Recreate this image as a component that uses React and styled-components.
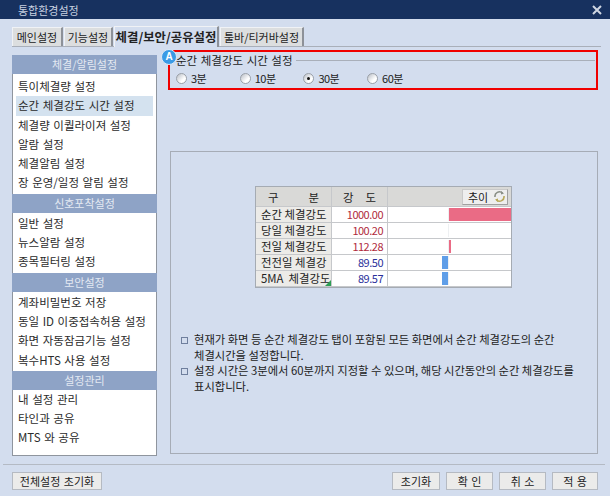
import React from 'react';
import styled, { createGlobalStyle } from 'styled-components';

const GlobalStyle = createGlobalStyle`
  html, body {
    margin: 0;
    padding: 0;
    background: #d3ddee;
  }
  * {
    box-sizing: border-box;
  }
`;

const FONT = `'Noto Sans CJK KR', 'Noto Sans', sans-serif`;

const Window = styled.div`
  width: 610px;
  height: 496px;
  background: #d3ddee;
  font-family: ${FONT};
  font-size: 11.5px;
  word-spacing: 1px;
  line-height: 16px;
  color: #222;
  overflow: hidden;
  display: flex;
  flex-direction: column;
`;

const TitleBar = styled.div`
  height: 19px;
  flex: none;
  background: #17315f;
  color: #c9d2e0;
  display: flex;
  align-items: center;
  justify-content: space-between;
  padding: 0 8px 0 18px;
  font-size: 11px;
`;

const TabRow = styled.div`
  height: 28px;
  flex: none;
  margin: 0 9px 0 12px;
  padding-top: 7px;
  display: flex;
  align-items: flex-end;
  gap: 1px;
  border-bottom: 1px solid #a9afb9;
`;

const Tab = styled.div`
  width: ${({ $w }) => $w}px;
  height: ${({ $active }) => ($active ? 21 : 19)}px;
  margin-bottom: ${({ $active }) => ($active ? -1 : 0)}px;
  background: ${({ $active }) => ($active ? '#d3ddee' : '#dcdedf')};
  border: 1px solid #f0f2f5;
  border-right: 2px solid #8d9198;
  border-bottom: none;
  font-weight: ${({ $active }) => ($active ? 700 : 400)};
  font-size: ${({ $active }) => ($active ? 12.4 : 11)}px;
  display: flex;
  align-items: center;
  justify-content: center;
  white-space: nowrap;
`;

const Main = styled.div`
  flex: 1;
  display: flex;
  gap: 11px;
  padding: 3px 12px 0 12px;
`;

const Sidebar = styled.div`
  width: 145px;
  height: 401px;
  margin-top: 5px;
  background: #fff;
  border: 1px solid #8f959e;
  border-top: none;
  flex: none;
`;

const SectionHead = styled.div`
  height: 19px;
  margin: 0 -1px;
  background: #8ea3c6;
  color: #e4e9f2;
  text-align: center;
  line-height: 19px;
  font-size: 11px;
`;

const SectionList = styled.div`
  padding: ${({ $top }) => $top ?? 1}px 3px 1px 3px;
`;

const SideItem = styled.div`
  height: 19.3px;
  line-height: 18px;
  padding-left: 2px;
  white-space: nowrap;
  color: #2b2b2b;
  background: ${({ $selected }) => ($selected ? '#d4e2ef' : 'transparent')};
`;

const Content = styled.div`
  flex: 1;
  display: flex;
  flex-direction: column;
`;

const GroupBox = styled.div`
  position: relative;
  height: 40px;
  border: 2px solid #f00000;
  padding: 0 0 0 6px;
`;

const Badge = styled.div`
  position: absolute;
  left: -9px;
  top: -3px;
  width: 16px;
  height: 16px;
  border-radius: 50%;
  background: #3b9be6;
  border: 1px solid #dfe9f5;
  color: #fff;
  font-family: 'Liberation Sans', sans-serif;
  font-size: 10px;
  font-weight: 700;
  line-height: 14px;
  text-align: center;
`;

const GroupTitle = styled.div`
  display: flex;
  align-items: center;
  gap: 3px;
  height: 16px;
  white-space: nowrap;
`;

const GroupLine = styled.div`
  flex: 1;
  height: 1px;
  margin-right: 1px;
  background: #a9afb9;
`;

const RadioRow = styled.div`
  display: flex;
  margin-top: 2px;
`;

const RadioLabel = styled.div`
  width: 63.7px;
  display: flex;
  align-items: center;
  gap: 4px;
  font-size: 11px;
  letter-spacing: -0.5px;
`;

const RadioDot = styled.span`
  width: 11px;
  height: 11px;
  border-radius: 50%;
  border: 1px solid #9aa0a8;
  background: linear-gradient(135deg, #b9bec6, #fff 65%);
  display: flex;
  align-items: center;
  justify-content: center;

  &::after {
    content: '';
    width: 3px;
    height: 3px;
    border-radius: 50%;
    background: ${({ $checked }) => ($checked ? '#111' : 'transparent')};
  }
`;

const Panel = styled.div`
  margin-top: 61px;
  height: 303px;
  margin-left: 2px;
  border: 1px solid #a6acb6;
  display: flex;
  flex-direction: column;
  align-items: center;
  padding-top: 34px;
`;

const Table = styled.div`
  width: 257px;
  margin-left: -1px;
  border: 1px solid #a5abb3;
  background: #fff;
  display: grid;
  grid-template-columns: 76px 56px 1fr;
  grid-template-rows: 20px repeat(5, 16px);
  font-size: 11.4px;
  word-spacing: 0;
`;

const HeadCell = styled.div`
  background: #d9d9d7;
  border-right: 1px solid #c6c8cb;
  border-bottom: 1px solid #c6c8cb;
  display: flex;
  align-items: center;
  justify-content: space-between;
  padding: 0 ${({ $pad }) => $pad}px;
`;

const TrendHead = styled(HeadCell)`
  justify-content: flex-end;
  padding: 0 3px 0 0;
  border-right: none;
`;

const TrendButton = styled.div`
  width: 46px;
  height: 16px;
  background: #eeeeee;
  border: 1px solid #c9c9c9;
  border-right-color: #a0a0a0;
  border-bottom-color: #a0a0a0;
  display: flex;
  align-items: center;
  justify-content: space-between;
  padding: 0 1px 0 5px;
  font-size: 11px;
`;

const LabelCell = styled.div`
  position: relative;
  background: #ecebe8;
  border-right: 1px solid #c6c8cb;
  border-bottom: 1px solid #c6c8cb;
  padding-left: 5px;
  line-height: 15px;
  white-space: pre;
`;

const Corner = styled.span`
  position: absolute;
  right: 0;
  bottom: 0;
  border-style: solid;
  border-width: 0 0 6px 6px;
  border-color: transparent transparent #2e9e54 transparent;
`;

const ValueCell = styled.div`
  border-right: 1px solid #c6c8cb;
  border-bottom: 1px solid #c6c8cb;
  color: ${({ $up }) => ($up ? '#b02a3c' : '#2b2f9a')};
  text-align: right;
  padding-right: 4px;
  line-height: 15px;
  font-size: 11px;
  letter-spacing: -0.5px;
`;

const BarCell = styled.div`
  border-bottom: 1px solid #c6c8cb;
  display: grid;
  grid-template-columns: 61px 1fr;
  padding: 1px 0;
`;

const BarLeft = styled.div`
  display: flex;
  justify-content: flex-end;
  border-right: 1px solid #eef0f2;
`;

const BarRight = styled.div`
  display: flex;
`;

const Bar = styled.div`
  height: 100%;
  background: ${({ $color }) => $color};
`;

const Notes = styled.ul`
  list-style: none;
  margin: 44px 0 0 0;
  padding: 0 0 0 10px;
  width: 100%;
  font-size: 11.3px;
  word-spacing: 0;
  word-break: keep-all;
`;

const Note = styled.li`
  position: relative;
  padding-left: 13px;
  line-height: 15.5px;
  width: 400px;

  &::before {
    content: '';
    position: absolute;
    left: 0;
    top: 5px;
    width: 5px;
    height: 5px;
    border: 1px solid #6f7f9d;
  }
`;

const Footer = styled.div`
  flex: none;
  height: 32px;
  margin: 0 5px 0 3px;
  border-top: 1px solid #b4bac4;
  padding: 7px 7px 0 9px;
  display: flex;
  gap: 6px;
  font-size: 11px;
`;

const FootButton = styled.div`
  width: ${({ $w }) => $w}px;
  height: 18px;
  margin-right: ${({ $push }) => ($push ? 'auto' : 0)};
  background: #ebebea;
  border: 1px solid #f5f5f5;
  outline: 1px solid #b5bac2;
  outline-offset: -1px;
  text-align: center;
  line-height: 16px;
  white-space: pre;
`;

const CloseIcon = () => (
  <svg width="10" height="10" viewBox="0 0 10 10">
    <path d="M1 1 L9 9 M9 1 L1 9" stroke="#cfd6e2" strokeWidth="2" />
  </svg>
);

const RefreshIcon = () => (
  <svg width="13" height="13" viewBox="0 0 13 13" fill="none">
    <path d="M2 7 A4.5 4.5 0 0 1 9.5 3" stroke="#8a8f86" strokeWidth="1.6" />
    <path d="M11 6 A4.5 4.5 0 0 1 3.5 10" stroke="#b9a95a" strokeWidth="1.6" />
    <path d="M8 1 L11 3.6 L8 4.6 Z" fill="#8a8f86" />
    <path d="M5 12 L2 9.4 L5 8.4 Z" fill="#b9a95a" />
  </svg>
);

const tabs = [
  { label: '메인설정', w: 51 },
  { label: '기능설정', w: 49 },
  { label: '체결/보안/공유설정', w: 105, active: true },
  { label: '툴바/티커바설정', w: 84 },
];

const menu = [
  { head: '체결/알림설정', top: 3, items: ['특이체결량 설정', '순간 체결강도 시간 설정', '체결량 이퀄라이져 설정', '알람 설정', '체결알림 설정', '장 운영/일정 알림 설정'] },
  { head: '신호포착설정', items: ['일반 설정', '뉴스알람 설정', '종목필터링 설정'] },
  { head: '보안설정', items: ['계좌비밀번호 저장', '동일 ID 이중접속허용 설정', '화면 자동잠금기능 설정', '복수HTS 사용 설정'] },
  { head: '설정관리', top: 0, items: ['내 설정 관리', '타인과 공유', 'MTS 와 공유'] },
];

const rows = [
  { label: '순간 체결강도', value: '1000.00', up: true, bar: 62 },
  { label: '당일 체결강도', value: '100.20', up: true, bar: 0 },
  { label: '전일 체결강도', value: '112.28', up: true, bar: 2 },
  { label: '전전일 체결강', value: '89.50', bar: -6 },
  { label: '5MA  체결강도', value: '89.57', bar: -6, corner: true },
];

const App = () => (
  <Window>
    <GlobalStyle />
    <TitleBar>
      통합환경설정
      <CloseIcon />
    </TitleBar>

    <TabRow>
      {tabs.map((t) => (
        <Tab key={t.label} $w={t.w} $active={t.active}>
          {t.label}
        </Tab>
      ))}
    </TabRow>

    <Main>
      <Sidebar>
        {menu.map((section) => (
          <div key={section.head}>
            <SectionHead>{section.head}</SectionHead>
            <SectionList $top={section.top}>
              {section.items.map((item) => (
                <SideItem key={item} $selected={item === '순간 체결강도 시간 설정'}>
                  {item}
                </SideItem>
              ))}
            </SectionList>
          </div>
        ))}
      </Sidebar>

      <Content>
        <GroupBox>
          <Badge>A</Badge>
          <GroupTitle>
            순간 체결강도 시간 설정
            <GroupLine />
          </GroupTitle>
          <RadioRow>
            {['3분', '10분', '30분', '60분'].map((label) => (
              <RadioLabel key={label}>
                <RadioDot $checked={label === '30분'} />
                {label}
              </RadioLabel>
            ))}
          </RadioRow>
        </GroupBox>

        <Panel>
          <Table>
            <HeadCell $pad={12}>
              <span>구</span>
              <span>분</span>
            </HeadCell>
            <HeadCell $pad={11}>
              <span>강</span>
              <span>도</span>
            </HeadCell>
            <TrendHead>
              <TrendButton>
                추이
                <RefreshIcon />
              </TrendButton>
            </TrendHead>
            {rows.map((r) => (
              <React.Fragment key={r.label}>
                <LabelCell>
                  {r.label}
                  {r.corner && <Corner />}
                </LabelCell>
                <ValueCell $up={r.up}>{r.value}</ValueCell>
                <BarCell>
                  <BarLeft>
                    {r.bar < 0 && <Bar $color="#5f9ee8" style={{ width: -r.bar }} />}
                  </BarLeft>
                  <BarRight>
                    {r.bar > 0 && <Bar $color="#ea6b85" style={{ width: r.bar }} />}
                  </BarRight>
                </BarCell>
              </React.Fragment>
            ))}
          </Table>

          <Notes>
            <Note>현재가 화면 등 순간 체결강도 탭이 포함된 모든 화면에서 순간 체결강도의 순간 체결시간을 설정합니다.</Note>
            <Note>설정 시간은 3분에서 60분까지 지정할 수 있으며, 해당 시간동안의 순간 체결강도를 표시합니다.</Note>
          </Notes>
        </Panel>
      </Content>
    </Main>

    <Footer>
      <FootButton $w={90} $push>전체설정 초기화</FootButton>
      <FootButton $w={48}>초기화</FootButton>
      <FootButton $w={47}>{'확 인'}</FootButton>
      <FootButton $w={47}>{'취 소'}</FootButton>
      <FootButton $w={46}>{'적 용'}</FootButton>
    </Footer>
  </Window>
);

export default App;
